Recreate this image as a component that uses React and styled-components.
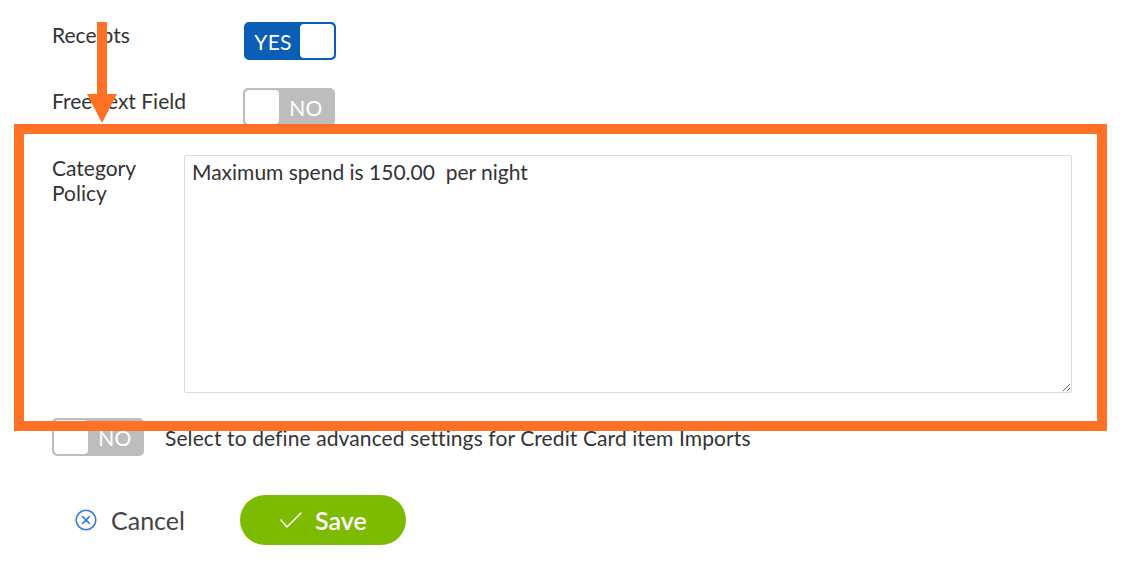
import styled, { createGlobalStyle } from "styled-components"

const GlobalStyle = createGlobalStyle`
  body {
    margin: 0;
    background: #fff;
    font-family: Lato, "Open Sans", sans-serif;
    color: #333;
  }
`

const Page = styled.div`
  position: relative;
  width: 1124px;
  height: 584px;
  overflow: hidden;
  padding: 22px 0 0 52px;
  box-sizing: border-box;
`

const Row = styled.div`
  display: flex;
  align-items: ${p => (p.center ? "center" : "flex-start")};
  margin-top: ${p => p.top || 0}px;
`

const Label = styled.div`
  box-sizing: border-box;
  width: ${p => p.width}px;
  padding-right: ${p => p.gap || 0}px;
  font-size: 21px;
  line-height: 25px;
  color: #333;
  flex-shrink: 0;
`

const Toggle = styled.div`
  display: flex;
  flex-direction: ${p => (p.on ? "row" : "row-reverse")};
  width: 92px;
  height: 38px;
  box-sizing: border-box;
  border-radius: 5px;
  border: 2px solid ${p => (p.on ? "#0b5eb5" : "#bdbdbd")};
  background: ${p => (p.on ? "#0b5eb5" : "#bdbdbd")};
  overflow: hidden;
  flex-shrink: 0;
`

const ToggleText = styled.span`
  flex: 1;
  display: flex;
  align-items: center;
  justify-content: center;
  color: #fff;
  font-size: 21px;
  letter-spacing: 0.3px;
`

const Knob = styled.span`
  width: 34px;
  background: #fff;
  border-radius: 4px;
`

const PolicyRow = styled.div`
  position: relative;
  display: flex;
  margin-top: 29px;
  &::after {
    content: "";
    position: absolute;
    left: -38px;
    top: -31px;
    width: 1093px;
    height: 307px;
    box-sizing: border-box;
    border: 10px solid #ff7124;
    pointer-events: none;
  }
`

const PolicyText = styled.textarea`
  width: 888px;
  height: 238px;
  box-sizing: border-box;
  border: 1px solid #dcdcdc;
  border-radius: 2px;
  padding: 3px 7px;
  font-family: Lato, "Open Sans", sans-serif;
  font-size: 21px;
  line-height: 25px;
  color: #333;
  resize: vertical;
  outline: none;
`

const Hint = styled.span`
  margin-left: 21px;
  font-size: 21px;
  color: #333;
  letter-spacing: 0.1px;
`

const Actions = styled.div`
  display: flex;
  align-items: center;
  margin-top: 39px;
  padding-left: 23px;
`

const CancelButton = styled.button`
  display: flex;
  align-items: center;
  gap: 14px;
  border: none;
  background: none;
  padding: 0;
  font-family: Lato, "Open Sans", sans-serif;
  font-size: 25px;
  color: #444;
  cursor: pointer;
`

const SaveButton = styled.button`
  display: flex;
  align-items: center;
  justify-content: center;
  gap: 12px;
  margin-left: 55px;
  width: 166px;
  height: 50px;
  border: none;
  border-radius: 25px;
  background: #7dbb00;
  color: #fff;
  font-family: Lato, "Open Sans", sans-serif;
  font-size: 25px;
  font-weight: 600;
  cursor: pointer;
`

const Arrow = styled.svg`
  position: absolute;
  left: 86px;
  top: 22px;
`

function Switch({ on }) {
  return (
    <Toggle on={on ? 1 : 0}>
      <ToggleText>{on ? "YES" : "NO"}</ToggleText>
      <Knob />
    </Toggle>
  )
}

export default function App() {
  return (
    <Page>
      <GlobalStyle />
      <Row>
        <Label width={192}>Receipts</Label>
        <Switch on />
      </Row>
      <Row top={28}>
        <Label width={191}>Free Text Field</Label>
        <Switch />
      </Row>
      <PolicyRow>
        <Label width={132} gap={30}>Category Policy</Label>
        <PolicyText defaultValue="Maximum spend is 150.00  per night" />
      </PolicyRow>
      <Row top={25} center>
        <Switch />
        <Hint>Select to define advanced settings for Credit Card item Imports</Hint>
      </Row>
      <Actions>
        <CancelButton>
          <svg width="22" height="22" viewBox="0 0 22 22" fill="none" stroke="#3a7fd6" strokeWidth="1.6" strokeLinecap="round">
            <circle cx="11" cy="11" r="9.8" />
            <path d="M7.6 7.6l6.8 6.8M14.4 7.6l-6.8 6.8" />
          </svg>
          Cancel
        </CancelButton>
        <SaveButton>
          <svg width="24" height="20" viewBox="0 0 24 20" fill="none" stroke="#fff" strokeWidth="1.6" strokeLinecap="round" strokeLinejoin="round">
            <path d="M2 10l6 7L22 3" />
          </svg>
          Save
        </SaveButton>
      </Actions>
      <Arrow width="32" height="102" viewBox="0 0 32 102">
        <rect x="11" y="0" width="10" height="74" fill="#ff7124" />
        <polygon points="1,72 31,72 16,101" fill="#ff7124" />
      </Arrow>
    </Page>
  )
}
